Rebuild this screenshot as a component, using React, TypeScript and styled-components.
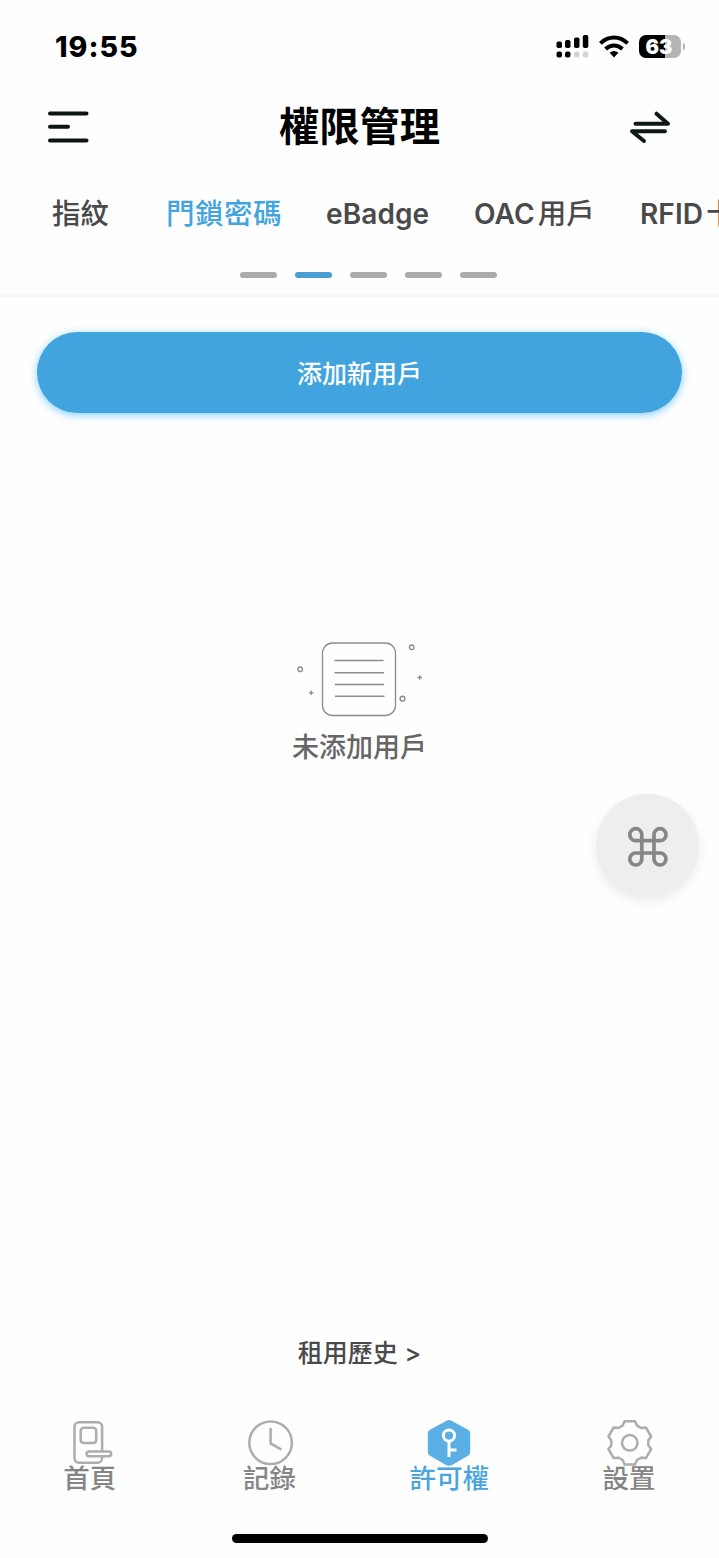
import React from "react";
import styled, { createGlobalStyle } from "styled-components";

const BLUE = "#41a4df";

const GlobalStyle = createGlobalStyle`
  * { box-sizing: border-box; }
  body { margin: 0; background: #fefefe; }
  button { font: inherit; border: 0; background: none; padding: 0; }
`;

const Screen = styled.div`
  width: 719px;
  height: 1558px;
  overflow: hidden;
  display: flex;
  flex-direction: column;
  background: #fefefe;
  font-family: Inter, "Noto Sans CJK TC", sans-serif;
  color: #4a4a4a;
`;

const StatusBar = styled.div`
  height: 92px;
  padding: 0 34px 0 55px;
  display: flex;
  align-items: center;
  justify-content: space-between;
`;

const Clock = styled.div`
  padding-top: 1px;
  font-size: 28.5px;
  line-height: 34px;
  font-weight: 800;
  letter-spacing: 1px;
  color: #000;
`;

const StatusIcons = styled.div`
  display: flex;
  align-items: center;
  gap: 10px;
`;

const Battery = styled.div`
  display: flex;
  align-items: center;
  gap: 2px;
`;

const BatteryBody = styled.div<{ $level: number }>`
  width: 42px;
  height: 23px;
  padding-right: 2px;
  border-radius: 7px;
  background: linear-gradient(90deg, #000 ${(p) => p.$level}%, #b5b5b5 ${(p) => p.$level}%);
  color: #fff;
  font-size: 20px;
  font-weight: 900;
  line-height: 24px;
  text-align: center;
`;

const BatteryCap = styled.div`
  width: 2px;
  height: 7px;
  border-radius: 0 2px 2px 0;
  background: #b5b5b5;
`;

const Header = styled.header`
  height: 70px;
  padding: 0 48px;
  display: flex;
  align-items: center;
  justify-content: space-between;
`;

const Title = styled.h1`
  margin: 0;
  font-size: 40.3px;
  line-height: 60px;
  font-weight: 700;
  color: #000;
`;

const Tabs = styled.nav`
  height: 100px;
  padding: 3px 0 0 52px;
  display: flex;
  align-items: center;
  gap: 44px;
  white-space: nowrap;
`;

const Tab = styled.button<{ $active?: boolean; $spacing?: number; $width: number }>`
  flex: none;
  width: ${(p) => p.$width}px;
  text-align: left;
  font-size: 28.5px;
  line-height: 44px;
  font-weight: 500;
  letter-spacing: ${(p) => p.$spacing ?? 0}px;
  word-spacing: -4.5px;
  color: ${(p) => (p.$active ? BLUE : "#4a4a4a")};
`;

const Latin = styled.span`
  font-size: 28px;
  font-weight: 600;
  letter-spacing: 0.1px;
`;

const Pager = styled.div`
  height: 35px;
  padding: 10px 0 0 18px;
  display: flex;
  justify-content: center;
  gap: 18.2px;
  border-bottom: 3px solid #f7f7f7;
`;

const PagerDash = styled.span<{ $active?: boolean }>`
  width: 37px;
  height: 6px;
  border-radius: 3px;
  background: ${(p) => (p.$active ? "#4a9fd2" : "#ababab")};
`;

const Content = styled.main`
  flex: 1;
  display: flex;
  flex-direction: column;
  align-items: center;
  padding: 35px 37px 0;
`;

const AddButton = styled.button`
  width: 100%;
  height: 81px;
  && { background: ${BLUE}; padding-bottom: 2px; }
  border-radius: 41px;
  box-shadow: 0 2px 9px rgba(65, 180, 250, 0.65);
  color: #fff;
  font-size: 25px;
  font-weight: 500;
`;

const Empty = styled.section`
  margin-top: 228px;
  display: flex;
  flex-direction: column;
  align-items: center;
`;

const EmptyText = styled.p`
  margin: 11px 0 0;
  font-size: 27px;
  line-height: 40px;
  font-weight: 500;
  color: #666;
`;

const FloatingButton = styled.button`
  position: absolute;
  left: 596px;
  top: 794px;
  width: 103px;
  height: 103px;
  && { background: #eee; padding-top: 2px; }
  border-radius: 50%;
  box-shadow: 0 4px 12px rgba(0, 0, 0, 0.08);
  display: flex;
  align-items: center;
  justify-content: center;
`;

const HistoryLink = styled.a`
  margin-top: auto;
  padding-bottom: 25px;
  font-size: 25px;
  line-height: 40px;
  font-weight: 500;
  color: #4a4a4a;
`;

const BottomNav = styled.nav`
  height: 114px;
  display: grid;
  grid-template-columns: repeat(4, 179.7px);
  padding-top: 22px;
`;

const NavItem = styled.button<{ $active?: boolean }>`
  display: flex;
  flex-direction: column;
  align-items: center;
  justify-content: flex-start;
  font-size: 26.5px;
  line-height: 36px;
  font-weight: 500;
  color: ${(p) => (p.$active ? "#4aa5dd" : "#858585")};
  svg { display: block; flex: none; }
`;

const NavLabel = styled.span`
  margin-top: -8px;
`;

const HomeArea = styled.div`
  height: 46px;
  display: flex;
  justify-content: center;
  padding-top: 22px;
`;

const HomeIndicator = styled.div`
  width: 256px;
  height: 9px;
  border-radius: 5px;
  background: #000;
`;

const SignalIcon = () => (
  <svg width="33" height="24" viewBox="0 0 33 24">
    <rect x="0.5" y="7.5" width="5.5" height="6.5" rx="1.8" />
    <rect x="9" y="6" width="5.5" height="8" rx="1.8" />
    <rect x="18" y="3.5" width="5.5" height="10.5" rx="1.8" />
    <rect x="26.8" y="1" width="5.5" height="13" rx="1.8" />
    <rect x="0.5" y="17.5" width="5.5" height="6" rx="2" />
    <rect x="9" y="17.5" width="5.5" height="6" rx="2" />
    <rect x="18" y="17.5" width="5.5" height="6" rx="2" fill="#d4d4d4" />
    <rect x="26.8" y="17.5" width="5.5" height="6" rx="2" fill="#d4d4d4" />
  </svg>
);

const WifiIcon = () => (
  <svg width="30" height="23" viewBox="0 0 30 23" fill="none" stroke="#000" strokeWidth="4">
    <path d="M1.4 8.4Q7.5 2.6 15 2.6T28.6 8.4" />
    <path d="M6.6 14Q10.5 10.4 15 10.4T23.4 14" />
    <path d="M10.6 17.8Q15 14.2 19.4 17.8L15 22.4Z" fill="#000" stroke="none" />
  </svg>
);

const MenuIcon = () => (
  <svg width="41" height="34" viewBox="0 0 41 34" stroke="#0d1512" strokeWidth="4" strokeLinecap="round">
    <path d="M2 3.5H38.5M2 16.8H20M2 30.5H38.5" />
  </svg>
);

const SwapIcon = () => (
  <svg width="41" height="34" viewBox="0 0 41 34" fill="none" stroke="#0d1914" strokeWidth="4" strokeLinecap="round" strokeLinejoin="round">
    <path d="M5.5 13.7H38L26.5 3.7" />
    <path d="M35 21.3H2L14 31" />
  </svg>
);

const EmptyIcon = () => (
  <svg width="128" height="76" viewBox="0.5 0 128 76" fill="none" stroke="#8c8c8c" strokeWidth="1.3">
    <rect x="27" y="2" width="73" height="72.5" rx="10" />
    <path d="M39 19.6H88M39 31.8H88.5M39.5 43.4H88.5M39.5 55.2H89" strokeWidth="1.5" />
    <circle cx="4.7" cy="28.3" r="2.3" />
    <circle cx="116.2" cy="6.3" r="2.3" />
    <circle cx="107" cy="57.7" r="2.4" strokeWidth="1.4" />
    <path d="M15.7 49.5V54M13.5 51.8H18M124.2 34.3V38.8M122 36.5H126.5" strokeWidth="1.3" />
  </svg>
);

const CommandIcon = () => (
  <svg width="42" height="42" viewBox="0 0 42 42" fill="none" stroke="#868686" strokeWidth="3.7">
    <path d="M14.8 8.7V33A6 6 0 1 1 8.8 27H33A6 6 0 1 1 27 33V8.7A6 6 0 1 1 33 14.7H8.8A6 6 0 1 1 14.8 8.7Z" />
  </svg>
);

const LockIcon = () => (
  <svg width="48" height="48" viewBox="0 0 48 48" fill="none" stroke="#adadad" strokeWidth="2.5">
    <rect x="8.5" y="2.2" width="27.6" height="40.6" rx="4.5" />
    <rect x="14.7" y="7.7" width="15.5" height="15.3" rx="3" />
    <rect x="20.6" y="31.4" width="24.6" height="4.8" rx="2.4" fill="#fefefe" />
  </svg>
);

const ClockIcon = () => (
  <svg width="48" height="48" viewBox="0 0 48 48" fill="none" stroke="#adadad" strokeWidth="2.5" strokeLinecap="round">
    <circle cx="24.6" cy="22.8" r="21.3" />
    <path d="M24.6 9V23.4L34.6 29.1" />
  </svg>
);

const KeyIcon = () => (
  <svg width="48" height="48" viewBox="0 0 48 48" fill="none">
    <path d="M22 0.6Q24 -0.5 26 0.6L43 9.8Q45.2 11 45.2 13.3V32.3Q45.2 34.6 43 35.8L27 45Q24 46.6 21 45L5 35.8Q2.8 34.6 2.8 32.3V13.3Q2.8 11 5 9.8Z" fill="#5aafe4" />
    <circle cx="24" cy="15.6" r="5.6" stroke="#fff" strokeWidth="3" />
    <path d="M24 21.2V37M24 30H31.5" stroke="#fff" strokeWidth="3" />
  </svg>
);

const toothAngles = [0, 60, 120, 180, 240, 300];
const toothPoints = [[-7.2, -17.2], [-5.2, -21.6], [5.2, -21.6], [7.2, -17.2]];
const gearPath =
  toothAngles
    .map((deg, i) => {
      const a = (deg * Math.PI) / 180;
      const at = ([x, y]: number[]) =>
        `${(x * Math.cos(a) - y * Math.sin(a)).toFixed(2)} ${(x * Math.sin(a) + y * Math.cos(a)).toFixed(2)}`;
      return `${i ? "L" : "M"}${at(toothPoints[0])}L${at(toothPoints[1])}L${at(toothPoints[2])}L${at(toothPoints[3])}`;
    })
    .join("") + "Z";

const GearIcon = () => (
  <svg width="48" height="48" viewBox="-24.8 -22.8 48 48" fill="none" stroke="#adadad" strokeWidth="2.5" strokeLinejoin="round">
    <path d={gearPath} />
    <circle r="7.8" />
  </svg>
);

export default function App() {
  return (
    <Screen lang="zh-Hant">
      <GlobalStyle />
      <StatusBar>
        <Clock>19:55</Clock>
        <StatusIcons>
          <SignalIcon />
          <WifiIcon />
          <Battery>
            <BatteryBody $level={63}>63</BatteryBody>
            <BatteryCap />
          </Battery>
        </StatusIcons>
      </StatusBar>
      <Header>
        <MenuIcon />
        <Title>權限管理</Title>
        <SwapIcon />
      </Header>
      <Tabs>
        <Tab $width={70}>指紋</Tab>
        <Tab $width={116} $active $spacing={0.5}>門鎖密碼</Tab>
        <Tab $width={104}><Latin>eBadge</Latin></Tab>
        <Tab $width={122}><Latin>OAC</Latin> 用戶</Tab>
        <Tab $width={100}><Latin>RFID</Latin> 卡</Tab>
      </Tabs>
      <Pager>
        <PagerDash />
        <PagerDash $active />
        <PagerDash />
        <PagerDash />
        <PagerDash />
      </Pager>
      <Content>
        <AddButton>添加新用戶</AddButton>
        <Empty>
          <EmptyIcon />
          <EmptyText>未添加用戶</EmptyText>
        </Empty>
        <HistoryLink>租用歷史 &gt;</HistoryLink>
      </Content>
      <BottomNav>
        <NavItem><LockIcon /><NavLabel>首頁</NavLabel></NavItem>
        <NavItem><ClockIcon /><NavLabel>記錄</NavLabel></NavItem>
        <NavItem $active><KeyIcon /><NavLabel>許可權</NavLabel></NavItem>
        <NavItem><GearIcon /><NavLabel>設置</NavLabel></NavItem>
      </BottomNav>
      <HomeArea><HomeIndicator /></HomeArea>
      <FloatingButton aria-label="快捷"><CommandIcon /></FloatingButton>
    </Screen>
  );
}
